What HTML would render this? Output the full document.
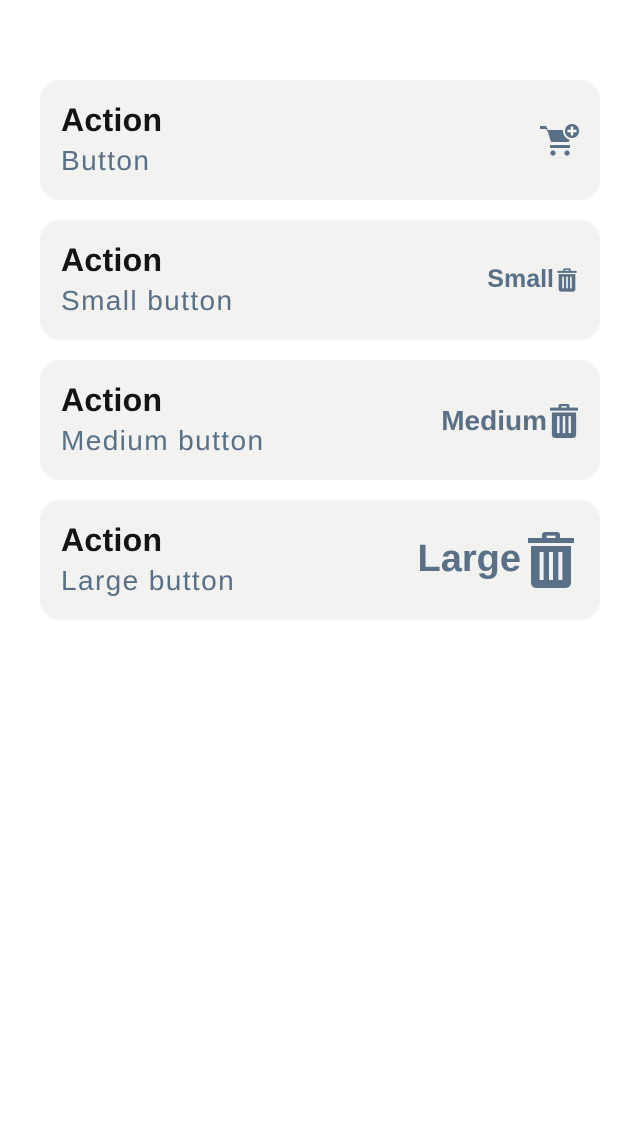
<!DOCTYPE html><html><head><style>
body{margin:0;width:640px;height:1136px;background:#fff;font-family:"Liberation Sans",sans-serif;position:relative}
.c{position:absolute;left:40px;width:560px;height:120px;background:#f2f2f1;border-radius:20px}
.t{position:absolute;left:21px;top:22px;font-size:32px;font-weight:bold;color:#141414;letter-spacing:0.3px}
.s{position:absolute;left:21px;top:65px;font-size:28px;color:#5a7087;letter-spacing:1.4px}
.r{position:absolute;color:#5a7087;font-weight:bold}
svg{position:absolute}
</style></head><body>
<svg width="0" height="0"><defs><symbol id="tr" viewBox="0 0 24 28"><path fill="#5a7087" fill-rule="evenodd" d="M7.5 3V1.5Q7.5 0 9 0h6Q16.5 0 16.5 1.5V3h7v2.5H.5V3zM9.8 3h4.4V1.8H9.8zM2 7h20v18q0 3-3 3H5q-3 0-3-3zM6.3 10v14h2V10zM11 10v14h2V10zM15.7 10v14h2V10z"/></symbol></defs></svg>
<div class="c" style="top:80px"><div class="t">Action</div><div class="s">Button</div>
<svg style="left:500px;top:42px" width="40" height="36" viewBox="0 0 40 36"><path fill="#5a7087" d="M0 4h6l2 4h24l-3 12H11L8 10 6 7H0z"/><rect x="10" y="23" width="20" height="3" fill="#5a7087"/><circle cx="13" cy="31" r="2.6" fill="#5a7087"/><circle cx="27" cy="31" r="2.6" fill="#5a7087"/><circle cx="32" cy="9" r="8" fill="#5a7087" stroke="#f2f2f1" stroke-width="2"/><path d="M32 4.5v9M27.5 9h9" stroke="#fff" stroke-width="2.4"/></svg></div>
<div class="c" style="top:220px"><div class="t">Action</div><div class="s">Small button</div>
<div class="r" style="right:46px;top:45px;font-size:25px">Small</div>
<svg style="left:517px;top:48px" width="20" height="24"><use href="#tr"/></svg></div>
<div class="c" style="top:360px"><div class="t">Action</div><div class="s">Medium button</div>
<div class="r" style="right:53px;top:45px;font-size:28px">Medium</div>
<svg style="left:509px;top:44px" width="30" height="34"><use href="#tr"/></svg></div>
<div class="c" style="top:500px"><div class="t">Action</div><div class="s">Large button</div>
<div class="r" style="right:79px;top:38px;font-size:38px">Large</div>
<svg style="left:486px;top:32px" width="50" height="56"><use href="#tr"/></svg></div>
</body></html>
